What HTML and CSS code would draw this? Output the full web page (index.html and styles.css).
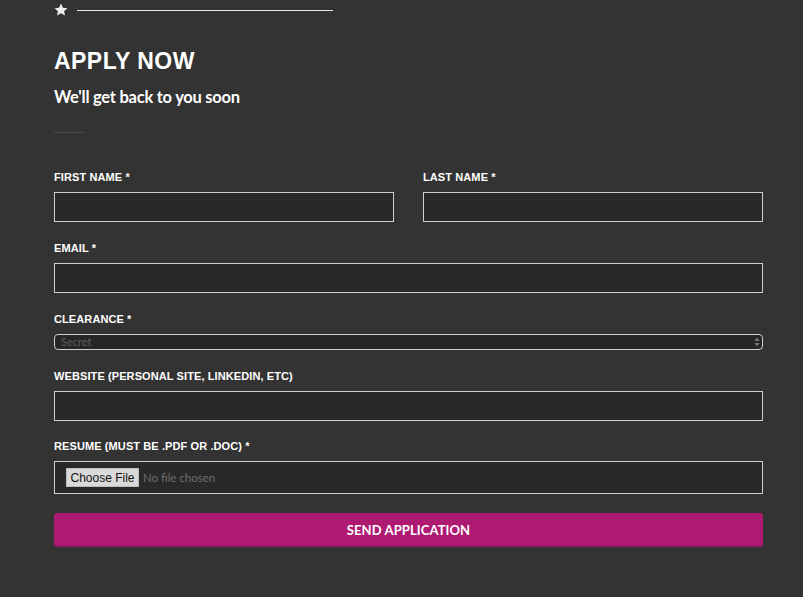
FILE: index.html
```html
<!DOCTYPE html>
<html>
<head>
<meta charset="utf-8">
<link rel="stylesheet" href="styles.css">
</head>
<body>
<div class="page">
  <div class="ornament">
    <svg class="star" width="14" height="14" viewBox="0 0 24 24"><path d="M12 1l3.3 7.2 7.7.7-5.8 5.1 1.8 7.6L12 17.6l-7 4 1.8-7.6L1 8.9l7.7-.7z" fill="#eeeeee"/></svg>
    <span class="ornament-line"></span>
  </div>
  <h1 class="title">APPLY NOW</h1>
  <p class="subtitle">We'll get back to you soon</p>
  <div class="divider"></div>

  <form class="form">
    <div class="row">
      <div class="group">
        <label class="label">First Name *</label>
        <input class="input" type="text">
      </div>
      <div class="group">
        <label class="label">Last Name *</label>
        <input class="input" type="text">
      </div>
    </div>
    <div class="group">
      <label class="label">Email *</label>
      <input class="input" type="text">
    </div>
    <div class="group">
      <label class="label">Clearance *</label>
      <div class="select-wrap">
        <select class="select"><option>Secret</option></select>
        <svg class="select-arrows" width="6" height="10" viewBox="0 0 6 10"><path d="M3 0.5L5.5 4H0.5z M3 9.5L0.5 6h5z" fill="#777"/></svg>
      </div>
    </div>
    <div class="group group-tight">
      <label class="label">Website (personal site, linkedin, etc)</label>
      <input class="input" type="text">
    </div>
    <div class="group">
      <label class="label">Resume (must be .pdf or .doc) *</label>
      <div class="file-box">
        <span class="file-btn">Choose File</span>
        <span class="file-text">No file chosen</span>
      </div>
    </div>
    <button type="button" class="submit">SEND APPLICATION</button>
  </form>
</div>
</body>
</html>
```
FILE: styles.css
```css
html, body {
  margin: 0;
  padding: 0;
  background: #333333;
}
.page {
  width: 709px;
  padding-left: 54px;
  font-family: "Liberation Sans", Arial, sans-serif;
  color: #ffffff;
}
.ornament {
  height: 20px;
  display: flex;
  align-items: center;
}
.star {
  display: block;
}
.ornament-line {
  display: block;
  width: 256px;
  height: 1px;
  background: #e6e6e6;
  margin-left: 9px;
}
.title {
  margin: 27px 0 0 0;
  font-family: "Liberation Sans", Arial, sans-serif;
  font-weight: bold;
  font-size: 23px;
  line-height: 28px;
  letter-spacing: 0.45px;
  color: #ffffff;
}
.subtitle {
  margin: 12px 0 0 0;
  font-family: Lato, "Open Sans", sans-serif;
  font-weight: 700;
  font-size: 16.5px;
  line-height: 20px;
  color: #ffffff;
  letter-spacing: -0.25px;
}
.divider {
  width: 30px;
  height: 1px;
  background: #4a4a4a;
  margin-top: 25px;
}
.form {
  margin-top: 37px;
}
.row {
  display: flex;
  gap: 29px;
}
.row .group {
  flex: 1;
}
.group {
  margin-bottom: 19px;
}
.group-tight {
  margin-bottom: 18px;
}
.label {
  display: block;
  font-family: "Liberation Sans", Arial, sans-serif;
  font-weight: bold;
  font-size: 11px;
  line-height: 14px;
  text-transform: uppercase;
  color: #ffffff;
  margin-bottom: 8px;
  letter-spacing: 0.1px;
}
.input {
  display: block;
  box-sizing: border-box;
  width: 100%;
  height: 30px;
  margin: 0;
  background: #292929;
  border: 1px solid #cfcfcf;
  border-radius: 0;
  outline: none;
  color: #fff;
}
.select-wrap {
  position: relative;
}
.select {
  display: block;
  box-sizing: border-box;
  width: 100%;
  height: 16px;
  margin: 0;
  padding: 0 0 0 6px;
  appearance: none;
  -webkit-appearance: none;
  background: #262626;
  border: 1px solid #d0d0d0;
  border-radius: 4px;
  font-family: Lato, "Open Sans", sans-serif;
  font-size: 11px;
  line-height: 14px;
  color: #5e5e5e;
  outline: none;
}
.select-arrows {
  position: absolute;
  right: 3px;
  top: 3px;
}
.file-box {
  box-sizing: border-box;
  height: 33px;
  background: #292929;
  border: 1px solid #cfcfcf;
  display: flex;
  align-items: center;
  padding-left: 11px;
}
.file-btn {
  display: block;
  box-sizing: border-box;
  width: 73px;
  height: 19px;
  background: #d9d9d9;
  border: 1px solid #bdbdbd;
  font-family: "Liberation Sans", Arial, sans-serif;
  font-size: 12px;
  line-height: 19px;
  text-align: center;
  color: #111;
}
.file-text {
  margin-left: 4px;
  font-family: Lato, "Open Sans", sans-serif;
  font-size: 11.5px;
  color: #6e6e6e;
}
.submit {
  display: block;
  box-sizing: border-box;
  width: 100%;
  height: 34px;
  margin: 0;
  padding: 2px 0 0 0;
  background: #ae1a72;
  border: none;
  border-bottom: 2px solid #9a1664;
  border-radius: 3px;
  font-family: Lato, "Open Sans", sans-serif;
  font-weight: 700;
  font-size: 13px;
  color: #ffffff;
  letter-spacing: 0.1px;
}
```
